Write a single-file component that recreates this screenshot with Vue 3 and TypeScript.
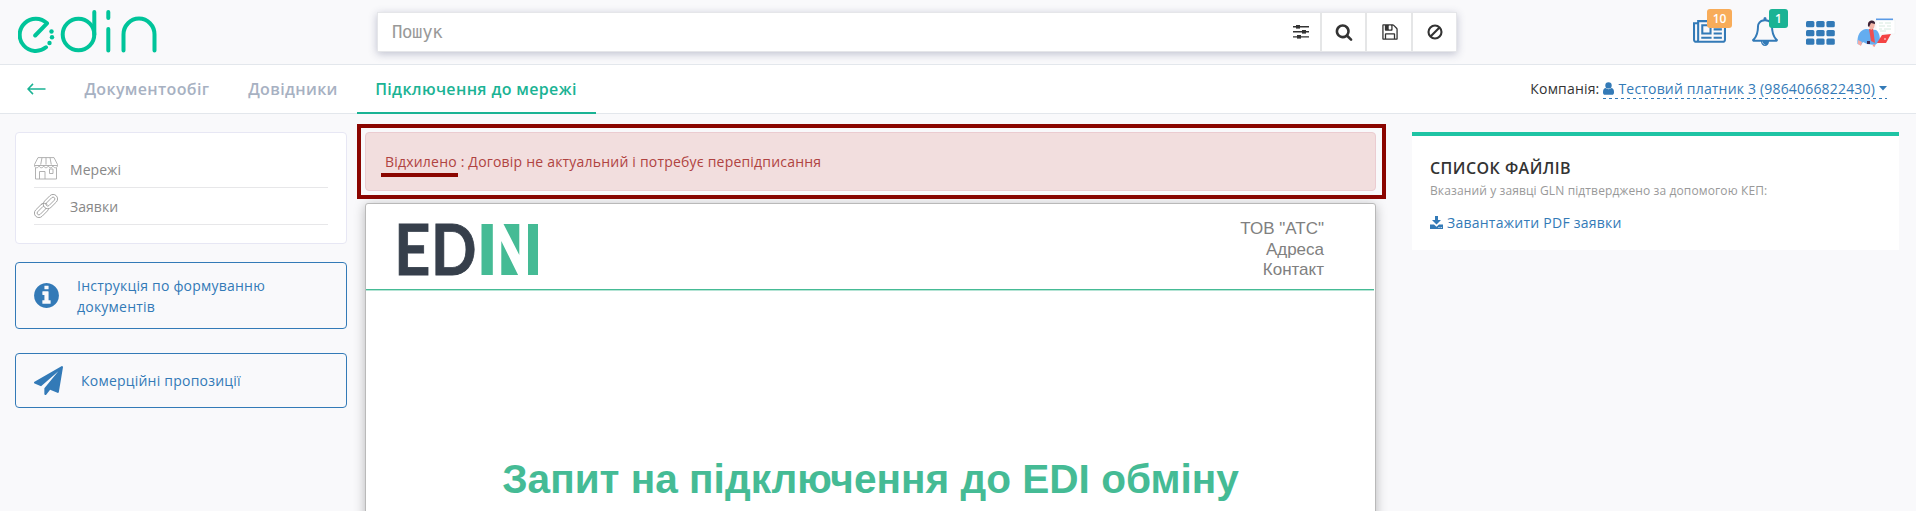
<script setup lang="ts">
interface Tab { label: string; active: boolean }
const tabs: Tab[] = [
  { label: 'Документообіг', active: false },
  { label: 'Довідники', active: false },
  { label: 'Підключення до мережі', active: true },
]
const gridRows: number[] = [0, 9, 17.5]
const gridCols: number[] = [0, 10.2, 20.4]
const contacts: string[] = ['ТОВ "АТС"', 'Адреса', 'Контакт']
</script>

<template>
  <div class="page">
    <header class="top">
      <svg class="brand" width="140" height="46" viewBox="0 0 140 46" fill="none" stroke="#00c49a" stroke-width="4" stroke-linecap="round" stroke-linejoin="round">
        <path d="M17.2 27.500 29 15.300A16.100 16.100 0 1 0 28 39.300" />
        <circle cx="60.500" cy="26.500" r="15.800" />
        <path d="M76.300 4v22.500M90.300 4v6M90.300 21v21.500M105.500 42.500V26.500a15.500 15.900 0 0 1 31 0v16" />
        <g fill="#00c49a" stroke="none">
          <circle cx="33.500" cy="23.500" r="2.200" /><circle cx="34" cy="29.300" r="2.200" /><circle cx="31.500" cy="35" r="2.200" />
        </g>
      </svg>

      <div class="search">
        <input class="search-input" type="text" placeholder="Пошук" />
        <button class="tool first">
          <svg width="16" height="14" viewBox="0 0 16 14" fill="#333"><path d="M0 1h16v1.400H0zM0 6.100h16v1.400H0zM0 11.200h16v1.400H0z" /><rect x="3" y="0" width="4" height="3.600" /><rect x="9" y="5" width="4" height="3.600" /><rect x="4" y="10" width="4" height="3.600" /></svg>
        </button>
        <button class="tool">
          <svg width="18" height="18" viewBox="0 0 1792 1792" fill="#333"><path d="M1216 832q0-185-131.500-316.500t-316.500-131.500-316.500 131.500-131.500 316.500 131.500 316.500 316.500 131.500 316.500-131.500 131.500-316.500zm512 832q0 52-38 90t-90 38q-54 0-90-38l-343-342q-179 124-399 124-143 0-273.500-55.500t-225-150-150-225-55.500-273.500 55.500-273.500 150-225 225-150 273.500-55.500 273.500 55.500 225 150 150 225 55.500 273.500q0 220-124 399l343 343q37 37 37 90z" /></svg>
        </button>
        <button class="tool save">
          <svg width="18" height="18" viewBox="0 0 1792 1792" fill="#333"><path d="M512 1536h768v-384h-768v384zm896 0h128v-896q0-14-10-38.500t-20-34.500l-281-281q-10-10-34-20t-39-10v416q0 40-28 68t-68 28h-576q-40 0-68-28t-28-68v-416h-128v1280h128v-416q0-40 28-68t68-28h832q40 0 68 28t28 68v416zm-384-928v-320q0-13-9.500-22.500t-22.500-9.500h-192q-13 0-22.500 9.500t-9.500 22.500v320q0 13 9.500 22.500t22.500 9.500h192q13 0 22.500-9.500t9.500-22.500zm640 32v928q0 40-28 68t-68 28h-1344q-40 0-68-28t-28-68v-1344q0-40 28-68t68-28h928q40 0 88 20t76 48l280 280q28 28 48 76t20 88z" /></svg>
        </button>
        <button class="tool">
          <svg width="16" height="16" viewBox="0 0 16 16" fill="none" stroke="#333" stroke-width="2.100"><circle cx="8" cy="8" r="6.500" /><path d="m3.500 12.500 9-9" /></svg>
        </button>
      </div>

      <div class="top-icons">
        <a class="icon news">
          <svg width="33" height="29" viewBox="0 0 2048 1792" preserveAspectRatio="none" fill="#337ab7"><path d="M1024 512h-384v384h384v-384zm128 640v128h-640v-128h640zm0-768v640h-640v-640h640zm640 768v128h-512v-128h512zm0-256v128h-512v-128h512zm0-256v128h-512v-128h512zm0-256v128h-512v-128h512zm-1536 960v-960h-128v960q0 26 19 45t45 19 45-19 19-45zm1664 0v-1088h-1536v1088q0 33-11 64h1483q26 0 45-19t19-45zm128-1216v1216q0 80-56 136t-136 56h-1664q-80 0-136-56t-56-136v-1088h256v-128h1792z" /></svg>
          <span class="badge orange">10</span>
        </a>
        <a class="icon bell">
          <svg width="28" height="29" viewBox="0 0 1792 1792" preserveAspectRatio="none" fill="#337ab7"><path d="M912 1696q0-16-16-16-59 0-101.500-42.500t-42.500-101.500q0-16-16-16t-16 16q0 73 51.500 124.500t124.500 51.500q16 0 16-16zm-666-288h1300q-266-300-266-832 0-51-24-105t-69-103-121.500-80.500-169.500-31.500-169.500 31.500-121.500 80.500-69 103-24 105q0 532-266 832zm1482 0q0 52-38 90t-90 38h-448q0 106-75 181t-181 75-181-75-75-181h-448q-52 0-90-38t-38-90q50-42 91-88t85-119.500 74.500-158.500 50-206 19.500-260q0-152 117-282.500t307-158.500q-8-19-8-39 0-40 28-68t68-28 68 28 28 68q0 20-8 39 190 28 307 158.500t117 282.500q0 139 19.500 260t50 206 74.500 158.500 85 119.500 91 88z" /></svg>
          <span class="badge green">1</span>
        </a>
        <svg class="apps" width="29" height="24" viewBox="0 0 29 24" fill="#337ab7">
          <template v-for="y in gridRows" :key="y">
            <rect v-for="x in gridCols" :key="x" :x="x" :y="y" width="8.400" height="6.200" rx="1.500" />
          </template>
        </svg>
        <svg class="avatar" width="40" height="30" viewBox="0 0 40 30">
          <rect x="19" y="2" width="19" height="14" rx="1" fill="#fff" stroke="#edf0f2" stroke-width=".6" />
          <path d="M19 1.300h17" stroke="#5b9be6" stroke-width="1.600" />
          <path d="M22 5h4M28 5h6M22 8h6M30 8h4M22 11h3M27 11h7M23 13h6" stroke="#cde5d8" stroke-width=".8" />
          <path d="M.5 26C0 17 3 12 9 11l10 1c3 2 4 6 4 11l-5 4-8-1-4-2-2 3z" fill="#64adf0" />
          <path d="m12 11 4-1 2 15-4-2z" fill="#f05050" />
          <path d="M11 6c0-4 7-4 7 0l-1 4-3 2-2-3z" fill="#f3b6a8" />
          <path d="M11 8c-1-7 8-7 7-2l-4-1-2 4z" fill="#3d2335" />
          <path d="m1 22 4 2-1 4-3-2z" fill="#f5aaa3" />
          <path d="m25 17 9-1-5 9h-9z" fill="#f44444" />
          <path d="M16 27l2 1" stroke="#f79993" stroke-width="2" />
          <path d="M10 23h3v3h-3z" fill="#3b2a54" /><circle cx="28" cy="21" r=".8" fill="#fff" />
        </svg>
      </div>
    </header>

    <nav class="nav">
      <a class="back">
        <svg width="19" height="12" viewBox="0 0 19 12" fill="none" stroke="#1ab394" stroke-width="1.500"><path d="M18.500 6H1M6 .900 1 6l5 5.100" /></svg>
      </a>
      <a v-for="t in tabs" :key="t.label" class="tab" :class="{ active: t.active }">{{ t.label }}</a>
      <div class="company">
        <span>Компанія:</span>
        <a class="company-link">
          <svg width="11" height="13" viewBox="0 0 11 13" fill="#337ab7"><circle cx="5.500" cy="3.400" r="3.200" /><path d="M2.500 6c-2 .3-2.500 2-2.500 4.500C0 12 .8 12.800 2 12.800h7c1.200 0 2-.8 2-2.300C11 8 10.500 6.300 8.500 6 6.800 7.500 4.200 7.500 2.500 6z" /></svg>
          <span class="company-name">Тестовий платник 3 (9864066822430)</span>
          <svg width="8" height="5" viewBox="0 0 8 5" fill="#337ab7"><path d="M0 0h8L4 4.500z" /></svg>
        </a>
      </div>
    </nav>

    <main class="content">
      <aside class="left">
        <div class="menu">
          <a class="menu-row">
            <svg width="24" height="24" viewBox="0 0 24 24" fill="none" stroke="#a9a9a9" stroke-width=".9">
              <path d="M4 .6h16l3.500 6.900v1H.5v-1zM8 .6l-1.300 7M12 .6v7M16 .6l1.300 7M.5 8.500c0 3 4.200 3 4.600 0 .4 3 4.200 3 4.600 0 .4 3 4.200 3 4.600 0 .4 3 4.200 3 4.600 0 .4 3 4.600 3 4.600 0M1.500 11v11h21V11M5.500 22v-7.500H11V22M15.500 12h3.500v4.500h-3.500z" />
            </svg>
            <span>Мережі</span>
          </a>
          <a class="menu-row">
            <svg width="24" height="24" viewBox="0 0 24 24" fill="none" stroke="#a0a0a0" stroke-width=".9">
              <g transform="rotate(-45 12 12)">
                <rect x="-2.500" y="7.500" width="16.500" height="9" rx="4.500" />
                <rect x=".2" y="10.200" width="11.100" height="3.600" rx="1.800" />
                <rect x="10" y="7.500" width="16.500" height="9" rx="4.500" fill="#fff" />
                <rect x="12.700" y="10.200" width="11.100" height="3.600" rx="1.800" />
                <path d="M9.500 7.500c2.500 0 4.500 2 4.500 4.500" />
              </g>
            </svg>
            <span>Заявки</span>
          </a>
        </div>
        <a class="action info">
          <svg width="29" height="29" viewBox="0 0 1792 1792" fill="#337ab7"><path d="M1152 1376v-160q0-14-9-23t-23-9h-96v-512q0-14-9-23t-23-9h-320q-14 0-23 9t-9 23v160q0 14 9 23t23 9h96v320h-96q-14 0-23 9t-9 23v160q0 14 9 23t23 9h448q14 0 23-9t9-23zm-128-896v-160q0-14-9-23t-23-9h-192q-14 0-23 9t-9 23v160q0 14 9 23t23 9h192q14 0 23-9t9-23zm640 416q0 209-103 385.500t-279.500 279.500-385.500 103-385.500-103-279.500-279.500-103-385.500 103-385.500 279.500-279.500 385.500-103 385.500 103 279.500 279.500 103 385.500z" /></svg>
          <span>Інструкція по формуванню документів</span>
        </a>
        <a class="action offers">
          <svg width="29" height="29" viewBox="0 0 1792 1792" fill="#337ab7"><path d="M1764 11q33 24 27 64l-256 1536q-5 29-32 45-14 8-31 8-11 0-24-5l-453-185-242 295q-18 23-49 23-13 0-22-4-19-7-30.500-23.500t-11.500-36.500v-349l864-1059-1069 925-395-162q-37-14-40-55-2-40 32-59l1664-960q15-9 32-9 20 0 36 11z" /></svg>
          <span>Комерційні пропозиції</span>
        </a>
      </aside>

      <section class="center">
        <div class="frame">
          <div class="alert"><span class="status">Відхилено</span> : Договір не актуальний і потребує перепідписання</div>
        </div>
        <article class="doc">
          <div class="doc-head">
            <svg class="doc-logo" width="139" height="52" viewBox="0 0 139 52">
              <text x="-6" y="50.500" class="logo-text" textLength="36.500" lengthAdjust="spacingAndGlyphs">E</text>
              <text x="31" y="50.500" class="logo-text" textLength="45.500" lengthAdjust="spacingAndGlyphs">D</text>
              <g fill="#45bb95"><rect x="81.500" width="11.300" height="51" /><path d="M103.500 0h15.800v31zM101.300 17v34h16.800z" /><rect x="128" width="10" height="51" /></g>
            </svg>
            <div class="contacts"><div v-for="c in contacts" :key="c">{{ c }}</div></div>
          </div>
          <h1>Запит на підключення до EDI обміну</h1>
        </article>
      </section>

      <aside class="files">
        <h2>СПИСОК ФАЙЛІВ</h2>
        <p>Вказаний у заявці GLN підтверджено за допомогою КЕП:</p>
        <a class="download">
          <svg width="13" height="13" viewBox="0 0 13 13" fill="#337ab7"><path d="M5 0h3v4h3L6.500 8.500 2 4h3zM0 8.500h4l2.500 2.300L9 8.500h4V13H0z" /><path d="M8.500 11h1v1h-1zm2.200 0h1v1h-1z" fill="#fff" /></svg>
          <span>Завантажити PDF заявки</span>
        </a>
      </aside>
    </main>
  </div>
</template>

<style>
body { overflow: hidden; background: #f9f9fb; }
</style>

<style scoped>
* { box-sizing: border-box; }
.page { height: 511px; overflow: hidden; background: #f9f9fb; font: 14px/21px "Open Sans", "Noto Sans", sans-serif; color: #333; }
svg { display: block; flex: none; }
.top { height: 65px; display: flex; border-bottom: 1px solid #e3e7ec; }
.brand { margin: 8px 0 0 17.500px; }
.search { display: flex; width: 1080px; height: 40px; margin: 12px 0 0 219.500px; background: #fff; border: 1px solid #e5e6e9; box-shadow: 0 2px 8px rgba(60, 65, 110, .3); }
.search-input { flex: 1; min-width: 0; border: 0; outline: 0; padding: 0 0 0 14px; background: transparent; font: 17.300px "DejaVu Sans Mono", monospace; letter-spacing: -.35px; }
.search-input::placeholder { color: #999; opacity: 1; }
.tool { width: 45.500px; padding: 0 0 0 1px; border: 0; border-left: 2px solid #e5e6e7; background: #fff; display: flex; align-items: center; justify-content: center; }
.tool.save { padding-left: 2px; }
.tool.first { border: 0; width: 40px; padding-left: 2px; }
.top-icons { display: flex; margin-left: 236px; }
.icon { position: relative; }
.news { margin-top: 18px; width: 33px; }
.bell { margin: 17px 0 0 25px; width: 28px; }
.apps { margin: 21px 0 0 26.500px; }
.avatar { margin: 18px 0 0 22.500px; }
.badge { position: absolute; height: 19px; border-radius: 3px; color: #fff; font-size: 12px; font-weight: 600; line-height: 19px; text-align: center; }
.orange { left: 14px; top: -9px; width: 25px; background: #f8ac59; }
.green { left: 18px; top: -8px; width: 19px; background: #1ab394; }
.nav { height: 49px; display: flex; background: #fff; border-bottom: 1px solid #e3e7ec; }
.back { width: 65px; padding: 18px 0 0 27px; }
.tab { padding: 0 19.400px; font-size: 16px; font-weight: 600; line-height: 48px; height: 49px; color: #a7b1c2; white-space: nowrap; letter-spacing: .35px; }
.tab.active { width: 239px; color: #1ab394; padding: 0 0 0 18px; border-bottom: 2px solid #1ab394; }
.company { margin: 13px 29px 0 auto; display: flex; gap: 4px; height: 22px; white-space: nowrap; letter-spacing: .18px; }
.company-link { display: flex; align-items: center; gap: 4px; height: 21px; color: #337ab7; background: repeating-linear-gradient(90deg, #337ab7 0 3px, transparent 3px 6px) left bottom / 100% 1px no-repeat; }
.content { display: flex; align-items: flex-start; }
.left { width: 332px; margin: 18px 0 0 15px; }
.menu { height: 112px; padding: 18px 18px 0; border: 1px solid #e7e7f4; border-radius: 4px; background: #fff; color: #888; }
.menu-row { display: flex; align-items: center; gap: 12px; height: 37px; border-bottom: 1px solid #e7e7e9; letter-spacing: .05px; }
.action { display: flex; align-items: center; border: 1px solid #337ab7; border-radius: 4px; color: #337ab7; letter-spacing: .22px; }
.info { height: 67px; margin-top: 18px; padding: 0 60px 0 16px; gap: 16px; }
.offers { height: 55px; margin-top: 24px; padding-left: 18px; gap: 18px; }
.center { width: 1029px; margin: 10px 0 0 10px; }
.frame { height: 75px; padding: 4px 6px 4px 4px; border: 4px solid #8b0500; }
.alert { height: 59px; padding: 18px 19px; border: 1px solid #ebccd1; border-radius: 4px; background: #f2dede; color: #b04341; letter-spacing: .2px; }
.status { position: relative; }
.status::after { content: ""; position: absolute; left: -4px; top: 21px; width: 77px; height: 4px; background: #8b0500; }
.doc { width: 1011px; height: 340px; margin: 4px 0 0 8px; background: #fff; border: 1px solid #b9b9b9; border-radius: 3px 3px 0 0; box-shadow: 0 2px 12px rgba(0, 0, 0, .27); }
.doc-head { display: flex; justify-content: space-between; height: 86px; margin-right: 1px; padding: 20px 50px 0 34px; border-bottom: 1px solid #45bb95; box-shadow: 0 1px 0 #b5e4d5; }
.doc-logo { overflow: visible; }
.logo-text { font: 700 71px Lato, sans-serif; fill: #363f4b; stroke: #363f4b; stroke-width: .8px; }
.contacts { margin-top: -5px; text-align: right; font: 17px/20.500px "Liberation Sans", Arial, sans-serif; color: #808080; }
h1 { margin: 166px 0 0; text-align: center; font: 700 40.600px/46px "Liberation Sans", Arial, sans-serif; color: #45bb95; }
.files { width: 487px; height: 118px; margin: 18px 0 0 26px; padding: 21px 18px; border-top: 4px solid #1fc4a4; background: #fff; }
h2 { margin: 0; font-size: 16px; line-height: 22px; font-weight: 600; letter-spacing: .45px; }
p { margin: 3px 0 0; font-size: 12px; line-height: 18px; color: #999; letter-spacing: .12px; }
.download { display: flex; gap: 4px; align-items: center; margin-top: 12px; color: #337ab7; letter-spacing: .25px; }
</style>
